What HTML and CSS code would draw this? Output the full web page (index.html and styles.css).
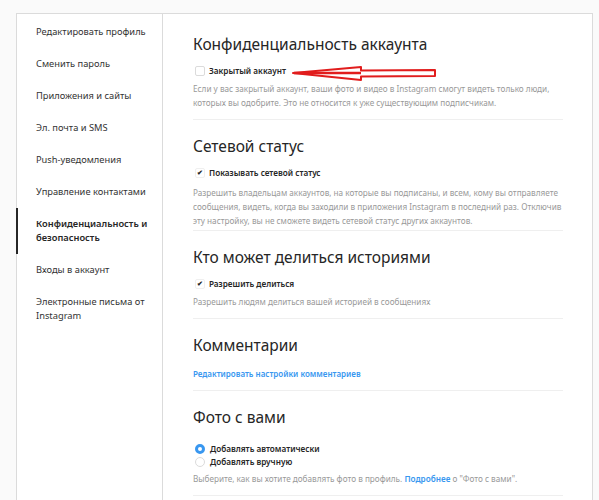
FILE: index.html
```html
<!DOCTYPE html>
<html lang="ru">
<head>
    <meta charset="UTF-8">
    <title>Конфиденциальность и безопасность</title>
    <link rel="stylesheet" href="styles.css">
</head>
<body>
    <div class="panel">
        <ul class="menu">
            <li>Редактировать профиль</li>
            <li>Сменить пароль</li>
            <li>Приложения и сайты</li>
            <li>Эл. почта и SMS</li>
            <li>Push-уведомления</li>
            <li>Управление контактами</li>
            <li class="active">Конфиденциальность и безопасность</li>
            <li>Входы в аккаунт</li>
            <li>Электронные письма от Instagram</li>
        </ul>

        <div class="content">
            <section class="block">
                <h2>Конфиденциальность аккаунта</h2>
                <label class="option">
                    <span class="box"></span>
                    Закрытый аккаунт
                </label>
                <p class="hint">Если у вас закрытый аккаунт, ваши фото и видео в Instagram смогут видеть только люди, которых вы одобрите. Это не относится к уже существующим подписчикам.</p>
            </section>

            <section class="block compact">
                <h2>Сетевой статус</h2>
                <label class="option">
                    <span class="box checked">&#10004;</span>
                    Показывать сетевой статус
                </label>
                <p class="hint">Разрешить владельцам аккаунтов, на которые вы подписаны, и всем, кому вы отправляете сообщения, видеть, когда вы заходили в приложения Instagram в последний раз. Отключив эту настройку, вы не сможете видеть сетевой статус других аккаунтов.</p>
            </section>

            <section class="block">
                <h2>Кто может делиться историями</h2>
                <label class="option">
                    <span class="box checked">&#10004;</span>
                    Разрешить делиться
                </label>
                <p class="hint">Разрешить людям делиться вашей историей в сообщениях</p>
            </section>

            <section class="block">
                <h2>Комментарии</h2>
                <a class="link" href="#">Редактировать настройки комментариев</a>
            </section>

            <section class="block">
                <h2 class="photo-title">Фото с вами</h2>
                <label class="option radio-row">
                    <span class="radio selected"></span>
                    Добавлять автоматически
                </label>
                <label class="option radio-row">
                    <span class="radio"></span>
                    Добавлять вручную
                </label>
                <p class="hint">Выберите, как вы хотите добавлять фото в профиль. <a class="more" href="#">Подробнее</a> о "Фото с вами".</p>
            </section>
        </div>

        <!-- red hand-drawn arrow pointing at the checkbox -->
        <svg class="arrow" width="148" height="18" viewBox="0 0 148 18">
            <polygon points="2,9 70,3 70,6.5 144,6 144,12 70,12.5 70,16" fill="none" stroke="#e11d1d" stroke-width="2" stroke-linejoin="round"/>
            <line x1="3" y1="9" x2="70" y2="9" stroke="#e11d1d" stroke-width="2.5"/>
        </svg>
    </div>
</body>
</html>
```

FILE: styles.css
```css
body {
    background-color: #fafafa;
    color: #262626;
    font-family: "Noto Sans", "Open Sans", sans-serif;
    margin: 0;
    padding: 13px 0 0 16px;
    overflow: hidden;
}

.panel {
    position: relative;
    display: flex;
    width: 575px;
    height: 520px;
    background-color: #fff;
    border: 1px solid #dbdbdb;
    border-bottom: none;
}

/* left menu */
.menu {
    list-style: none;
    margin: 0;
    padding: 2px 0 0;
    width: 145px;
    flex-shrink: 0;
    border-right: 1px solid #dbdbdb;
}

.menu li {
    font-size: 9.3px;
    line-height: 14px;
    padding: 9px 10px 9px 18px;
    color: #333;
    border-left: 2px solid transparent;
    margin-left: -1px;
}

.menu li.active {
    border-left-color: #262626;
    font-weight: 600;
    color: #262626;
}

/* right side */
.content {
    flex: 1;
    padding: 4px 29px 0 30px;
}

.block {
    padding: 16px 0 9px;
    border-bottom: 1px solid #efefef;
}

.block.compact {
    padding-bottom: 2px;
}

.block.compact .hint {
    margin-top: 6px;
}

.block h2 {
    margin: 0 0 10px;
    font-size: 15.5px;
    font-weight: 400;
    line-height: 20px;
    color: #262626;
}

.option {
    display: flex;
    align-items: center;
    font-size: 8.2px;
    font-weight: 600;
    line-height: 14px;
    color: #262626;
}

.box {
    width: 8px;
    height: 8px;
    margin: 0 4px 0 2px;
    border: 1px solid #dbdbdb;
    border-radius: 2px;
    font-size: 6.5px;
    line-height: 8px;
    text-align: center;
    color: #262626;
}

.box.checked {
    border-color: #efefef;
}

.hint {
    margin: 4px 0 0;
    font-size: 8.2px;
    line-height: 14px;
    color: #999;
}

.link {
    display: block;
    margin: 12px 0 0;
    font-size: 8px;
    font-weight: 600;
    line-height: 14px;
    color: #3897f0;
    text-decoration: none;
}

.block .photo-title {
    margin-bottom: 15px;
}

.radio-row {
    line-height: 13px;
}

.radio {
    width: 10px;
    height: 10px;
    margin: 0 5px 0 2px;
    border: 1px solid #dbdbdb;
    border-radius: 50%;
    box-sizing: border-box;
}

.radio.selected {
    border: 3px solid #3897f0;
}

.more {
    color: #3897f0;
    font-weight: 600;
    text-decoration: none;
}

.arrow {
    position: absolute;
    left: 274px;
    top: 50px;
}
```
